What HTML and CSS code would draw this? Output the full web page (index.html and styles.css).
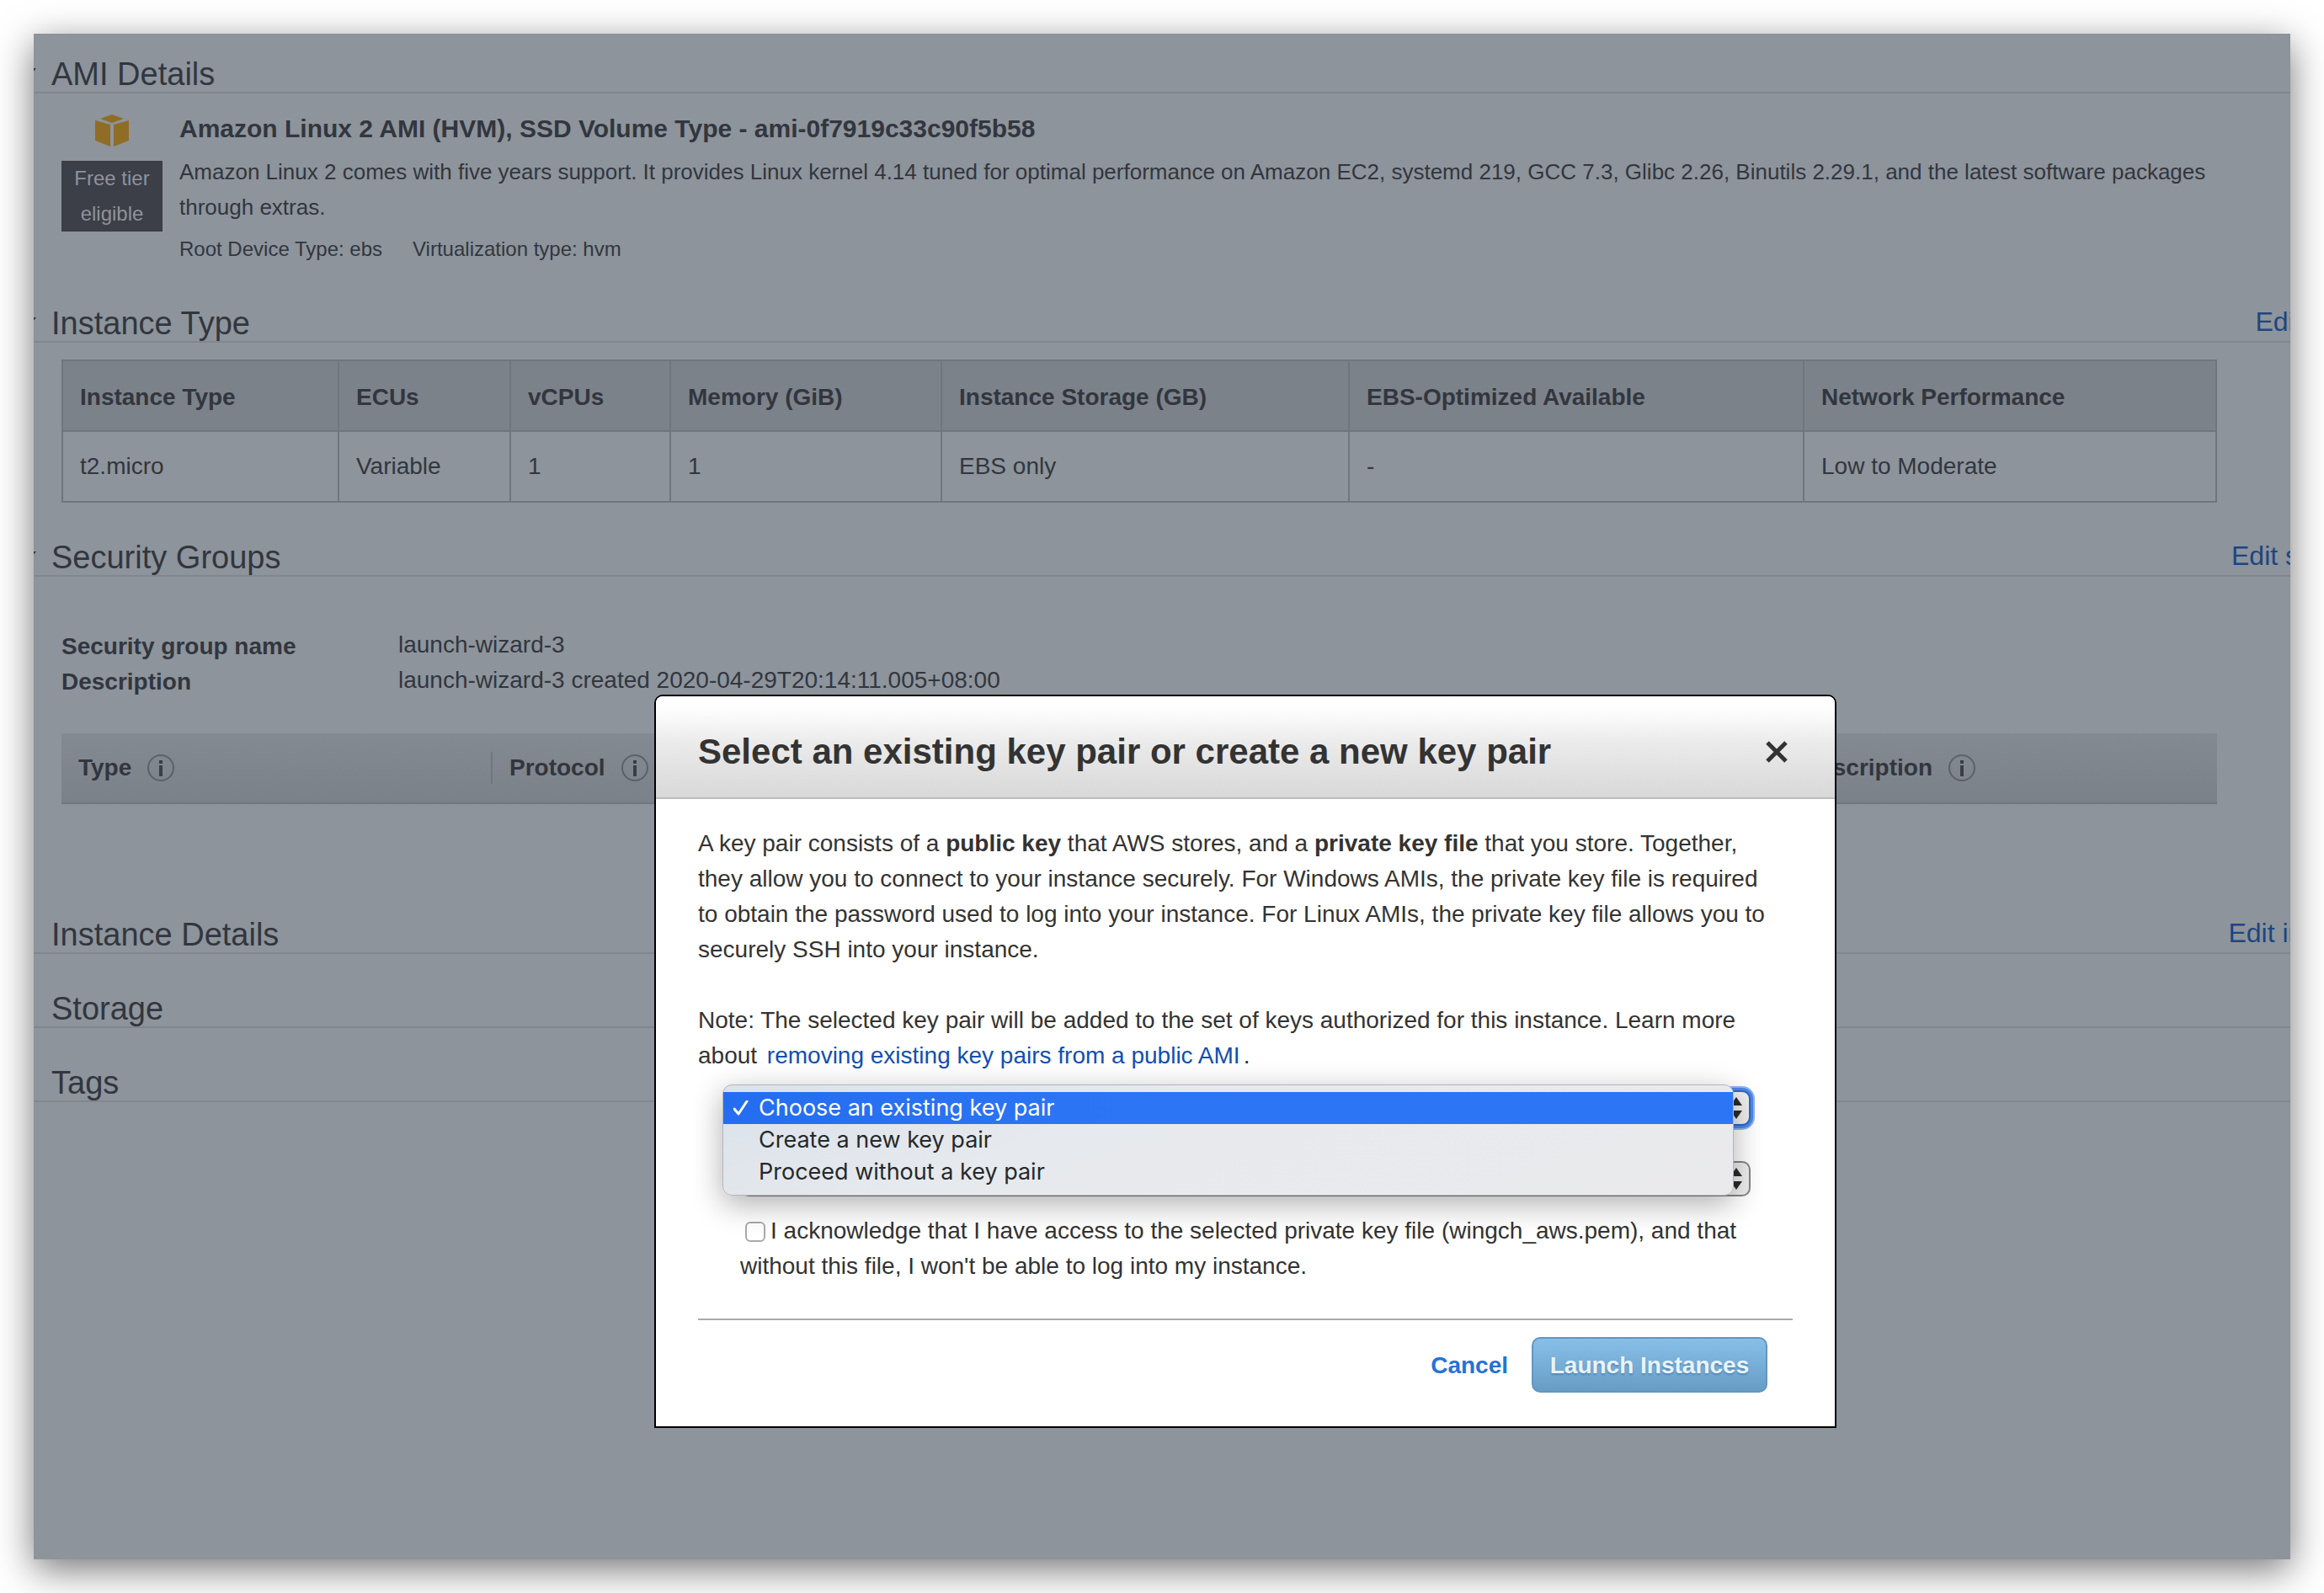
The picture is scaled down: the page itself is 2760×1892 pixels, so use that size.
FILE: index.html
```html
<!DOCTYPE html>
<html lang="en">
<head>
<meta charset="utf-8">
<meta name="viewport" content="width=device-width, initial-scale=1">
<title>Review Instance Launch</title>
<link rel="stylesheet" href="styles.css">
</head>
<body>
<svg class="sprite" aria-hidden="true">
  <symbol id="info" viewBox="0 0 34 34">
    <circle cx="17" cy="17" r="15" fill="none" stroke="#5b616a" stroke-width="2"/>
    <rect x="15" y="8" width="4" height="4" fill="#3a3e47"/>
    <rect x="15" y="14" width="4" height="13" fill="#3a3e47"/>
  </symbol>
  <symbol id="caret-open" viewBox="0 0 24 14"><path d="M0 0h24L12 14z" fill="#32363f"/></symbol>
  <symbol id="caret-closed" viewBox="0 0 24 14"><path d="M4 -2v18l12-9z" fill="#32363f"/></symbol>
  <symbol id="updown" viewBox="0 0 14 26"><path d="M7 0l7 10H0zM0 16h14L7 26z" fill="#2b2b2b"/></symbol>
</svg>

<div class="window">
  <main class="review">
    <section>
      <div class="section-head">
        <svg class="caret"><use href="#caret-open"/></svg>
        <h2>AMI Details</h2>
      </div>
      <div class="ami">
        <div class="ami-side">
          <svg class="ami-icon" viewBox="0 0 40 38" fill="#8f6d27">
            <path d="M20 0L34 5 20 10 6 5z"/>
            <path d="M0 7L18 12V38L0 31z"/>
            <path d="M40 7L22 12V38L40 31z"/>
          </svg>
          <span class="badge">Free tier eligible</span>
        </div>
        <div class="ami-text">
          <h3>Amazon Linux 2 AMI (HVM), SSD Volume Type - ami-0f7919c33c90f5b58</h3>
          <p class="ami-desc">Amazon Linux 2 comes with five years support. It provides Linux kernel 4.14 tuned for optimal performance on Amazon EC2, systemd 219, GCC 7.3, Glibc 2.26, Binutils 2.29.1, and the latest software packages through extras.</p>
          <p class="ami-meta"><span>Root Device Type: ebs</span><span>Virtualization type: hvm</span></p>
        </div>
      </div>
    </section>

    <section>
      <div class="section-head">
        <svg class="caret"><use href="#caret-open"/></svg>
        <h2>Instance Type</h2>
        <a href="#type">Edit instance type</a>
      </div>
      <table class="types">
        <colgroup><col class="c1"><col class="c2"><col class="c3"><col class="c4"><col class="c5"><col class="c6"><col class="c7"></colgroup>
        <thead>
          <tr><th>Instance Type</th><th>ECUs</th><th>vCPUs</th><th>Memory (GiB)</th><th>Instance Storage (GB)</th><th>EBS-Optimized Available</th><th>Network Performance</th></tr>
        </thead>
        <tbody>
          <tr><td>t2.micro</td><td>Variable</td><td>1</td><td>1</td><td>EBS only</td><td>-</td><td>Low to Moderate</td></tr>
        </tbody>
      </table>
    </section>

    <section>
      <div class="section-head">
        <svg class="caret"><use href="#caret-open"/></svg>
        <h2>Security Groups</h2>
        <a href="#groups">Edit security groups</a>
      </div>
      <dl class="group">
        <dt>Security group name</dt><dd>launch-wizard-3</dd>
        <dt>Description</dt><dd>launch-wizard-3 created 2020-04-29T20:14:11.005+08:00</dd>
      </dl>
      <table class="rules">
        <thead>
          <tr>
            <th><span class="th">Type <svg class="info"><use href="#info"/></svg></span></th>
            <th><span class="th">Protocol <svg class="info"><use href="#info"/></svg></span></th>
            <th aria-label="Port Range"><span class="th"></span></th>
            <th aria-label="Source"><span class="th"></span></th>
            <th><span class="th">Description <svg class="info"><use href="#info"/></svg></span></th>
          </tr>
        </thead>
      </table>
    </section>

    <section>
      <div class="section-head">
        <svg class="caret"><use href="#caret-closed"/></svg>
        <h2>Instance Details</h2>
        <a href="#details">Edit instance details</a>
      </div>
    </section>
    <section>
      <div class="section-head">
        <svg class="caret"><use href="#caret-closed"/></svg>
        <h2>Storage</h2>
      </div>
    </section>
    <section>
      <div class="section-head">
        <svg class="caret"><use href="#caret-closed"/></svg>
        <h2>Tags</h2>
      </div>
    </section>
  </main>

  <div class="modal" role="dialog" aria-labelledby="modal-title">
    <header class="modal-head">
      <h1 id="modal-title">Select an existing key pair or create a new key pair</h1>
      <button type="button" class="close" aria-label="Close">
        <svg viewBox="0 0 26 26"><path d="M2 2l22 22M24 2L2 24" stroke="#333" stroke-width="5" fill="none"/></svg>
      </button>
    </header>
    <form class="modal-body">
      <p>A key pair consists of a <b>public key</b> that AWS stores, and a <b>private key file</b> that you store. Together, they allow you to connect to your instance securely. For Windows AMIs, the private key file is required to obtain the password used to log into your instance. For Linux AMIs, the private key file allows you to securely SSH into your instance.</p>
      <p class="note">Note: The selected key pair will be added to the set of keys authorized for this instance. Learn more about <a href="#remove">removing existing key pairs from a public AMI</a>.</p>
      <div class="fields">
        <div class="picker">
          <select class="focused" aria-label="Key pair option"></select>
          <svg class="arrows"><use href="#updown"/></svg>
          <ul class="menu" role="listbox" aria-label="Key pair options">
            <li class="on" role="option" aria-selected="true"><svg class="tick" viewBox="0 0 18 18"><path d="M1 10l5 6L16 1" fill="none" stroke="#fff" stroke-width="3" stroke-linecap="round" stroke-linejoin="round"/></svg>Choose an existing key pair</li>
            <li role="option">Create a new key pair</li>
            <li role="option">Proceed without a key pair</li>
          </ul>
        </div>
        <div class="picker">
          <select aria-label="Select a key pair"></select>
          <svg class="arrows"><use href="#updown"/></svg>
        </div>
        <label class="ack"><input type="checkbox">I acknowledge that I have access to the selected private key file (wingch_aws.pem), and that without this file, I won't be able to log into my instance.</label>
      </div>
      <footer class="actions">
        <button type="button" class="cancel">Cancel</button>
        <button type="button" class="launch">Launch Instances</button>
      </footer>
    </form>
  </div>
</div>
</body>
</html>
```
FILE: styles.css
```css
* { box-sizing: border-box; }

body {
  margin: 0;
  padding: 40px;
  min-height: 100vh;
  display: flex;
  background: #fff;
  color: #32363f;
  font: 28px/42px "Liberation Sans", Arial, Helvetica, sans-serif;
}

h1, h2, h3, p, dl, dd, ul { margin: 0; padding: 0; }
button, select, input { font: inherit; margin: 0; }
.sprite { position: absolute; width: 0; height: 0; }

.window {
  position: relative;
  flex: 1;
  min-width: 0;
  overflow: hidden;
  background: #8d949b;
  box-shadow: 0 12px 42px rgba(0, 0, 0, .54);
}

.review {
  display: flex;
  flex-direction: column;
  gap: 44px;
  padding: 27px 87px 40px 33px;
}

.section-head {
  display: flex;
  align-items: center;
  margin: 0 -298px 0 -54px;
  border-bottom: 2px solid #81878e;
}
.caret { width: 24px; height: 14px; margin-right: 18px; }
.section-head h2 { flex: 1; font-size: 38px; font-weight: normal; }
.section-head a { font-size: 32px; line-height: 36px; padding-bottom: 4px; }
a { color: #1d4680; text-decoration: none; }

.ami { display: flex; gap: 20px; padding: 20px 0 2px; margin-right: -50px; }
.ami-side { width: 120px; display: flex; flex-direction: column; align-items: center; }
.ami-icon { width: 40px; height: 38px; margin: 5px 0 17px; }
.badge {
  width: 120px;
  padding: 0 12px;
  text-align: center;
  font-size: 24px;
  background: #3c3e48;
  color: #8e939b;
}
.ami-text { flex: 1; }
.ami h3 { font-size: 30px; line-height: 44px; margin-bottom: 8px; }
.ami-desc { font-size: 26px; }
.ami-meta { display: flex; gap: 36px; margin-top: 8px; font-size: 24px; }

table { width: 100%; border-collapse: collapse; table-layout: fixed; text-align: left; }
th { font-weight: bold; }
.types { margin-top: 20px; }
.types th, .types td { height: 84px; padding: 0 20px; border: 2px solid #70767d; }
.types th { padding-top: 3px; background: #7c8289; }
.c1 { width: 328px; } .c2 { width: 204px; } .c3 { width: 190px; } .c4 { width: 322px; }
.c5 { width: 484px; } .c6 { width: 540px; } .c7 { width: 490px; }

.group {
  display: grid;
  grid-template-columns: 400px 1fr;
  grid-auto-rows: 42px;
  margin: 60px 0 42px;
}
.group dt { font-weight: bold; line-height: 45px; }
.rules { margin-bottom: 90px; background: linear-gradient(#848a91, #7b8188); }
.rules th { height: 83px; padding: 0; border-bottom: 2px solid #70767d; }
.th {
  display: flex;
  align-items: center;
  gap: 18px;
  padding-left: 20px;
  height: 38px;
  line-height: 38px;
  border-right: 2px solid #70767d;
}
.rules th:last-child .th { border-right: 0; }
.info { width: 34px; height: 34px; }

.modal {
  position: absolute;
  top: 785px;
  left: 737px;
  width: 1404px;
  border: 2px solid #000;
  border-radius: 10px 10px 0 0;
  background: #fff;
  color: #333;
}
.modal-head {
  display: flex;
  align-items: center;
  justify-content: space-between;
  height: 122px;
  padding: 12px 56px 0 50px;
  border-bottom: 2px solid #bcbcbc;
  border-radius: 8px 8px 0 0;
  background: linear-gradient(#fff, #fdfdfd 14%, #ebebeb 45%, #d8d8d8);
}
.modal-head h1 { font-size: 42px; line-height: 48px; }
.close { display: flex; padding: 0; border: 0; background: none; }
.close svg { width: 26px; height: 26px; }

.modal-body { padding: 32px 50px 40px; }
.modal-body p { max-width: 1280px; }
.note { margin-top: 42px; }
.note a { color: #124fae; margin: 0 4px; }
.fields { width: 1200px; margin: 20px 0 41px 50px; }
.picker { position: relative; height: 42px; margin-bottom: 42px; }
.picker select {
  display: block;
  width: 100%;
  height: 42px;
  padding: 0 40px 0 16px;
  appearance: none;
  border: 2px solid #858585;
  border-radius: 10px;
  background: #efefef;
  color: #333;
  font-size: 24px;
  line-height: 36px;
}
.picker .focused { border-color: #2e66c4; box-shadow: 0 0 0 3px #4a87ea, 0 0 0 5px #8fb6f3; }
.arrows { position: absolute; right: 10px; top: 8px; width: 14px; height: 26px; }
.menu {
  position: absolute;
  z-index: 1;
  top: -7px;
  left: -21px;
  width: 1201px;
  padding: 8px 0;
  list-style: none;
  border: 1px solid #b4b6b9;
  border-radius: 11px;
  background: linear-gradient(160deg, #dae2ea, #e6e9ed 35%, #eaeaec);
  box-shadow: 0 10px 36px rgba(0, 0, 0, .32);
  color: #26282b;
  font: 27px/38px Inter, "Liberation Sans", sans-serif;
}
.menu li { position: relative; padding-left: 42px; }
.menu .on { background: linear-gradient(90deg, #246df0, #2c76f5 40%); color: #fff; }
.tick { position: absolute; left: 12px; top: 10px; width: 18px; height: 18px; }
.ack { display: block; margin-top: -22px; }
.ack input {
  appearance: none;
  width: 24px;
  height: 24px;
  margin: 0 6px;
  vertical-align: -4px;
  border: 2px solid #a9a9a9;
  border-radius: 6px;
  background: #fff;
}

.actions {
  display: flex;
  justify-content: flex-end;
  align-items: center;
  gap: 28px;
  padding: 20px 30px 0 0;
  border-top: 2px solid #a9a9a9;
}
.cancel { padding: 2px 0 0; border: 0; background: none; color: #2472d8; font-weight: bold; }
.launch {
  width: 280px;
  height: 66px;
  padding: 2px 0 0;
  border: 2px solid #6396c0;
  border-radius: 10px;
  background: linear-gradient(#88bfe9, #679dc5);
  color: #e9f3fb;
  font-weight: bold;
  text-shadow: 0 2px 2px rgba(40, 90, 140, .4);
}
```
